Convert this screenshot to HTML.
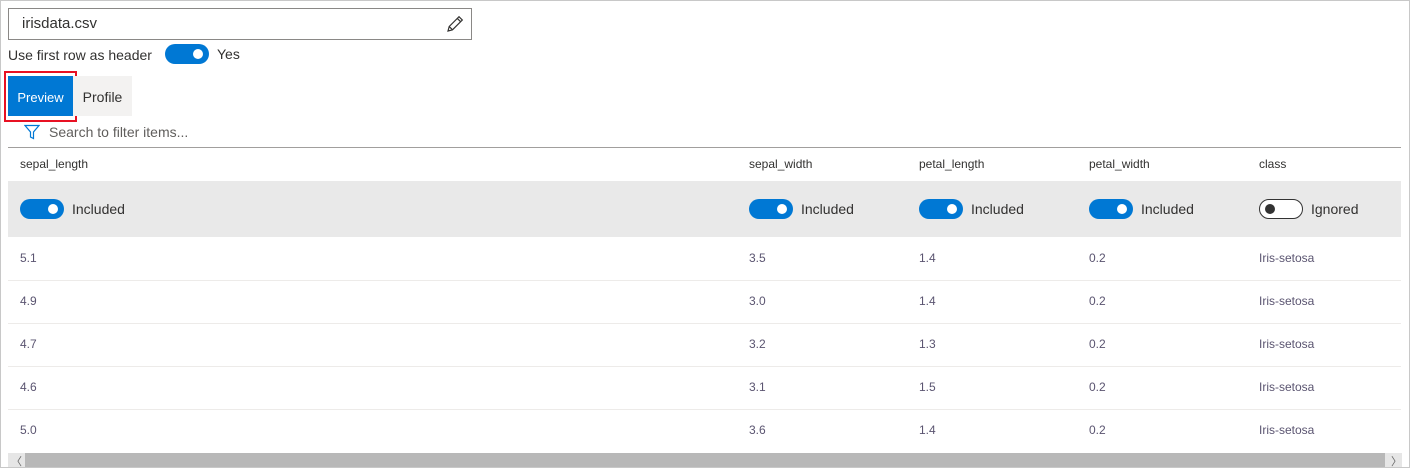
<!DOCTYPE html>
<html><head><style>
*{box-sizing:border-box;margin:0;padding:0}
body{width:1410px;height:468px;background:#fff;font-family:"Liberation Sans",sans-serif;position:relative;overflow:hidden;color:#323130}
.frame{position:absolute;left:0;top:0;width:1410px;height:468px;border:1px solid #c8c8c8}
.abs{position:absolute}
.tog{position:absolute;width:44px;height:20px;border-radius:10px;background:#0078d4}
.tog::after{content:"";position:absolute;right:6px;top:5px;width:10px;height:10px;border-radius:50%;background:#fff}
.tog.off{background:#fff;border:1px solid #333}
.tog.off::after{left:5px;right:auto;top:4px;background:#333}
.lbl{position:absolute;font-size:14px;color:#323130}
.hd{position:absolute;top:157px;font-size:12px;color:#323130}
.cell{position:absolute;font-size:12px;color:#5a5470}
.line{position:absolute;left:8px;width:1393px;height:1px;background:#edebe9}
</style></head><body>
<div class="frame"></div>
<div class="abs" style="left:8px;top:8px;width:464px;height:32px;border:1px solid #8a8886"></div>
<div class="abs" style="left:22px;top:15px;font-size:15px;color:#323130">irisdata.csv</div>
<svg class="abs" style="left:445px;top:14px" width="20" height="20" viewBox="0 0 20 20"><path d="M3 17l1.2-4.5L14 2.7l3.3 3.3-9.8 9.8z M4.2 12.5l3.3 3.3 M12.3 4.4l3.3 3.3" fill="none" stroke="#323130" stroke-width="1.2"/></svg>
<div class="abs" style="left:8px;top:47px;font-size:14px">Use first row as header</div>
<div class="tog" style="left:165px;top:44px"></div>
<div class="abs" style="left:217px;top:46px;font-size:14px">Yes</div>
<div class="abs" style="left:4px;top:71px;width:73px;height:51px;border:2px solid #e81123"></div>
<div class="abs" style="left:8px;top:76px;width:65px;height:40px;background:#0078d4;color:#fff;font-size:13px;line-height:43px;text-align:center">Preview</div>
<div class="abs" style="left:73px;top:76px;width:59px;height:40px;background:#f3f2f1;font-size:14px;line-height:43px;text-align:center">Profile</div>
<svg class="abs" style="left:24px;top:124px" width="16" height="16" viewBox="0 0 16 16"><path d="M1 1.5h14L9.5 8v6.5L6.5 13V8z" fill="none" stroke="#0078d4" stroke-width="1.2"/></svg>
<div class="abs" style="left:49px;top:124px;font-size:14px;color:#605e5c">Search to filter items...</div>
<div class="abs" style="left:8px;top:147px;width:1393px;height:1px;background:#a19f9d"></div>
<div class="hd" style="left:20px">sepal_length</div>
<div class="hd" style="left:749px">sepal_width</div>
<div class="hd" style="left:919px">petal_length</div>
<div class="hd" style="left:1089px">petal_width</div>
<div class="hd" style="left:1259px">class</div>
<div class="abs" style="left:8px;top:181px;width:1393px;height:56px;background:#e9e9e9"></div>
<div class="tog" style="left:20px;top:199px"></div><div class="lbl" style="left:72px;top:201px">Included</div>
<div class="tog" style="left:749px;top:199px"></div><div class="lbl" style="left:801px;top:201px">Included</div>
<div class="tog" style="left:919px;top:199px"></div><div class="lbl" style="left:971px;top:201px">Included</div>
<div class="tog" style="left:1089px;top:199px"></div><div class="lbl" style="left:1141px;top:201px">Included</div>
<div class="tog off" style="left:1259px;top:199px"></div><div class="lbl" style="left:1311px;top:201px">Ignored</div>

<div class="cell" style="left:20px;top:251px">5.1</div><div class="cell" style="left:749px;top:251px">3.5</div><div class="cell" style="left:919px;top:251px">1.4</div><div class="cell" style="left:1089px;top:251px">0.2</div><div class="cell" style="left:1259px;top:251px">Iris-setosa</div>
<div class="line" style="top:280px"></div>
<div class="cell" style="left:20px;top:294px">4.9</div><div class="cell" style="left:749px;top:294px">3.0</div><div class="cell" style="left:919px;top:294px">1.4</div><div class="cell" style="left:1089px;top:294px">0.2</div><div class="cell" style="left:1259px;top:294px">Iris-setosa</div>
<div class="line" style="top:323px"></div>
<div class="cell" style="left:20px;top:337px">4.7</div><div class="cell" style="left:749px;top:337px">3.2</div><div class="cell" style="left:919px;top:337px">1.3</div><div class="cell" style="left:1089px;top:337px">0.2</div><div class="cell" style="left:1259px;top:337px">Iris-setosa</div>
<div class="line" style="top:366px"></div>
<div class="cell" style="left:20px;top:380px">4.6</div><div class="cell" style="left:749px;top:380px">3.1</div><div class="cell" style="left:919px;top:380px">1.5</div><div class="cell" style="left:1089px;top:380px">0.2</div><div class="cell" style="left:1259px;top:380px">Iris-setosa</div>
<div class="line" style="top:409px"></div>
<div class="cell" style="left:20px;top:423px">5.0</div><div class="cell" style="left:749px;top:423px">3.6</div><div class="cell" style="left:919px;top:423px">1.4</div><div class="cell" style="left:1089px;top:423px">0.2</div><div class="cell" style="left:1259px;top:423px">Iris-setosa</div>

<div class="abs" style="left:8px;top:453px;width:1394px;height:14px;background:#e6e6e6"></div>
<div class="abs" style="left:25px;top:453px;width:1360px;height:14px;background:#b8b8b8"></div>
<div class="abs" style="left:11px;top:453px;font-size:11px;color:#666">&#x2329;</div>
<div class="abs" style="left:1391px;top:453px;font-size:11px;color:#666">&#x232A;</div>
</body></html>
